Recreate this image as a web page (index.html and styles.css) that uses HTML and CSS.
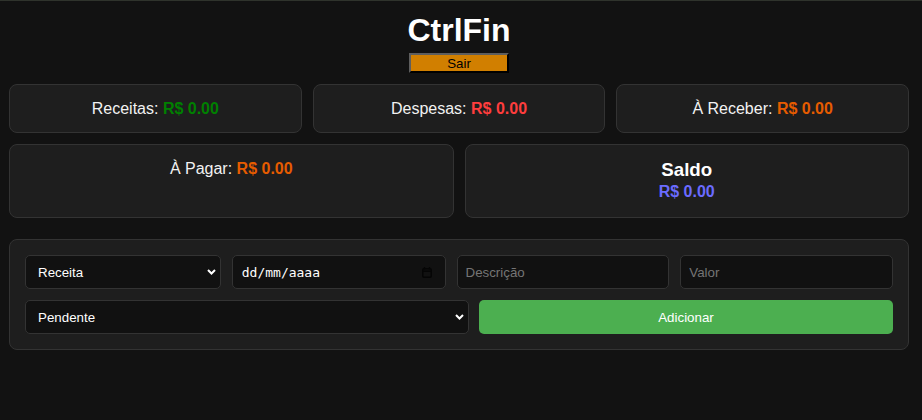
FILE: index.html
```html
<!DOCTYPE html>
<html lang="pt-BR">
<head>
<meta charset="utf-8">
<title>CtrlFin</title>
<link rel="stylesheet" href="styles.css">
</head>
<body>
<div class="app">
  <header class="top">
    <h1 class="brand">CtrlFin</h1>
    <button class="logout" type="button">Sair</button>
  </header>

  <section class="summary summary-3">
    <div class="card">Receitas: <span class="val green">R$ 0.00</span></div>
    <div class="card">Despesas: <span class="val red">R$ 0.00</span></div>
    <div class="card">À Receber: <span class="val orange">R$ 0.00</span></div>
  </section>

  <section class="summary summary-2">
    <div class="card">À Pagar: <span class="val orange">R$ 0.00</span></div>
    <div class="card saldo">
      <h3 class="saldo-title">Saldo</h3>
      <div class="val blue saldo-val">R$ 0.00</div>
    </div>
  </section>

  <form class="entry">
    <div class="form-row row-a">
      <select class="field select">
        <option>Receita</option>
        <option>Despesa</option>
      </select>
      <div class="field date">
        <span class="date-text">dd/mm/aaaa</span>
        <svg class="cal" width="10" height="11" viewBox="0 0 10 11" aria-hidden="true">
          <path d="M2.5 0v2.5M7.5 0v2.5" stroke="#050505" stroke-width="1.3" fill="none"/>
          <rect x="0.75" y="1.75" width="8.5" height="8.5" rx="1.2" fill="none" stroke="#050505" stroke-width="1.5"/>
          <path d="M1 4.2h8" stroke="#050505" stroke-width="1.6"/>
        </svg>
      </div>
      <input class="field text" type="text" placeholder="Descrição">
      <input class="field text" type="text" placeholder="Valor">
    </div>
    <div class="form-row row-b">
      <select class="field select">
        <option>Pendente</option>
        <option>Pago</option>
      </select>
      <button class="add" type="button">Adicionar</button>
    </div>
  </form>
</div>
</body>
</html>
```

FILE: styles.css
```css
html, body {
  margin: 0;
  padding: 0;
}

body {
  background: #121212;
  color: #f2f2f2;
  font-family: "Liberation Sans", Arial, sans-serif;
  border-top: 1px solid #2f332c;
  min-height: 419px;
}

.app {
  width: 900px;
  margin-left: 9px;
}

.top {
  display: flex;
  flex-direction: column;
  align-items: center;
  margin-bottom: 11px;
}

.brand {
  margin: 11px 0 4px;
  font-size: 32px;
  line-height: 37px;
  font-weight: bold;
  color: #ffffff;
}

.logout {
  width: 100px;
  height: 20px;
  padding: 0;
  background: #d17f00;
  color: #000;
  font-family: "Liberation Sans", Arial, sans-serif;
  font-size: 13.33px;
  border-width: 2px;
  border-style: solid;
  border-color: #5e5e5e #000 #000 #5e5e5e;
}

.summary {
  display: grid;
  gap: 11px;
}

.summary-3 {
  grid-template-columns: 1fr 1fr 1fr;
}

.summary-2 {
  grid-template-columns: 1fr 1fr;
  margin-top: 11px;
}

.card {
  background: #1e1e1e;
  border: 1px solid #333;
  border-radius: 8px;
  padding: 14px 15px;
  text-align: center;
  font-size: 16px;
  line-height: 19px;
}

.val {
  font-weight: bold;
}

.green { color: #008000; }
.red { color: #ff3d3d; }
.orange { color: #e65c00; }
.blue { color: #6b6bff; }

.saldo {
  padding: 12px 15px 15px;
}

.saldo-title {
  margin: 0;
  font-size: 18.72px;
  line-height: 25px;
  color: #fff;
}

.saldo-val {
  line-height: 20px;
}

.entry {
  margin-top: 21px;
  background: #1e1e1e;
  border: 1px solid #333;
  border-radius: 8px;
  padding: 15px;
  display: flex;
  flex-direction: column;
  gap: 11px;
}

.form-row {
  display: grid;
}

.row-a {
  grid-template-columns: 196fr 214fr 213fr 213fr;
  gap: 11px;
}

.row-b {
  grid-template-columns: 444fr 414fr;
  gap: 10px;
}

.field {
  box-sizing: border-box;
  height: 34px;
  margin: 0;
  background: #111;
  border: 1px solid #333;
  border-radius: 5px;
  color: #fff;
  font-family: "Liberation Sans", Arial, sans-serif;
  font-size: 13.33px;
  min-width: 0;
}

.select {
  appearance: none;
  -webkit-appearance: none;
  padding: 0 20px 0 12px;
  background-image: url("data:image/svg+xml,%3Csvg xmlns='http://www.w3.org/2000/svg' width='9' height='6' viewBox='0 0 9 6'%3E%3Cpath d='M1 1l3.5 3.5L8 1' fill='none' stroke='%23fff' stroke-width='2'/%3E%3C/svg%3E");
  background-repeat: no-repeat;
  background-position: right 4px center;
  background-size: 9px 6px;
}

.date {
  display: flex;
  align-items: center;
  justify-content: space-between;
  padding: 0 13px 0 9px;
}

.date-text {
  font-family: "DejaVu Sans Mono", "Liberation Mono", monospace;
  font-size: 13px;
  color: #fff;
}

.cal {
  display: block;
}

.text {
  padding: 0 8px;
  outline: none;
}

.text::placeholder {
  color: #757575;
}

.add {
  height: 34px;
  border: none;
  border-radius: 5px;
  background: #4caf50;
  color: #fff;
  font-family: "Liberation Sans", Arial, sans-serif;
  font-size: 13.33px;
  padding: 0;
}
```
